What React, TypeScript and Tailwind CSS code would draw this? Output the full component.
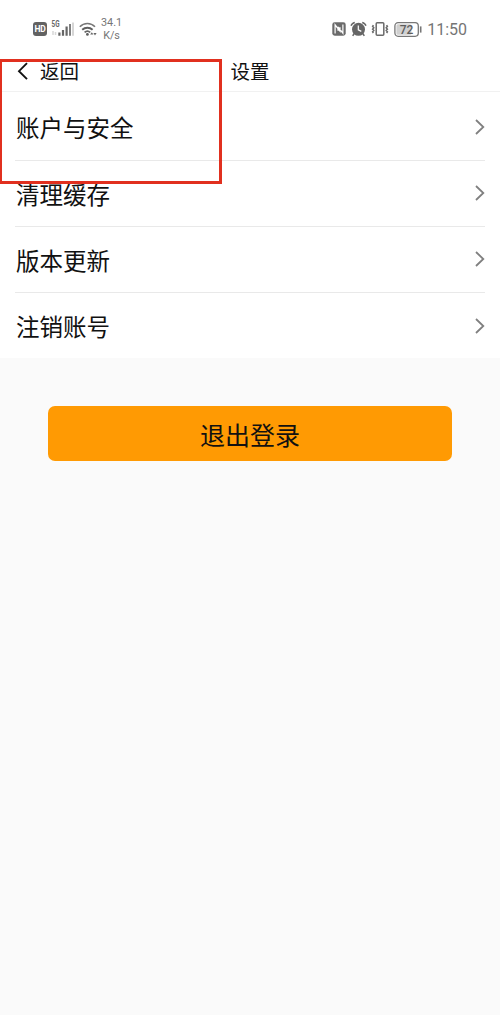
import React from 'react';

interface SettingRowProps {
  label: string;
  last?: boolean;
}

const rows = ['账户与安全', '清理缓存', '版本更新', '注销账号'];

const StatusBar: React.FC = () => {
  return (
    <div className="h-[50px] pt-[15px] pl-[33px] pr-[33px] flex justify-between text-[#757575]">
      <div className="flex h-[28px] items-center">
        {/* HD badge */}
        <div className="w-[14px] h-[14px] rounded-[3px] bg-[#626262] text-white text-[8.5px] leading-[14px] font-bold text-center tracking-[-0.3px]">
          HD
        </div>

        {/* 5G signal */}
        <svg className="ml-[4px]" width="24" height="18" viewBox="0 0 24 18">
          <text x="0.5" y="7.3" fontSize="9" fontWeight="700" fill="#666" textLength="8" lengthAdjust="spacingAndGlyphs">
            5G
          </text>
          <path d="M2 11v4M4.5 12v3" stroke="#d8d8d8" strokeWidth="1.5" />
          <path d="M8.4 12.5v3.2M12 10v5.7M15.6 6.5v9.2" stroke="#666" strokeWidth="2.2" />
          <path d="M19 4v11.7" stroke="#808080" strokeWidth="2" />
          <path d="M22 2.5v13.2" stroke="#ccc" strokeWidth="1.6" />
        </svg>

        {/* Wi-Fi */}
        <svg className="ml-[4px]" width="18" height="16" viewBox="0 0 18 16" fill="none">
          <path d="M0.8 5.8C5 1.4 11.8 1.4 16 5.8" stroke="#777" strokeWidth="1.6" />
          <path d="M3.2 8.8C6.2 6 10.6 6 13.6 8.8" stroke="#5f5f5f" strokeWidth="1.9" />
          <path d="M5.6 11.4C7.4 9.8 9.4 9.8 11.2 11.4" stroke="#666" strokeWidth="1.8" />
          <circle cx="8.4" cy="13.4" r="1.4" fill="#5f5f5f" />
          <path d="M12.8 11.2l-1.6 2.4h3.2zM16 14.6l-1.6-2.6h3.2z" fill="#666" />
        </svg>

        <div className="ml-[4px] pt-px text-[10.8px] leading-[12.5px] text-center">
          <div>34.1</div>
          <div>K/s</div>
        </div>
      </div>

      <div className="flex h-[28px] items-center">
        {/* NFC */}
        <svg width="14" height="14" viewBox="0 0 14 14" fill="none">
          <rect x="0.3" y="0.3" width="13.4" height="13.4" rx="2.4" fill="#6b6b6b" />
          <path d="M3.1 11.6V2.8L8 9.2V5.2M6 4.8v4M10.9 2.4v8.8L6 4.8" stroke="#fff" strokeWidth="1.2" />
        </svg>

        {/* Alarm */}
        <svg className="ml-[4px]" width="17" height="16" viewBox="0 0 17 16" fill="none">
          <circle cx="8.5" cy="8.3" r="6.5" fill="#666" />
          <path d="M1.1 4.8C1.5 3.2 3 1.8 4.8 1.4M15.9 4.8C15.5 3.2 14 1.8 12.2 1.4" stroke="#666" strokeWidth="1.5" />
          <path d="M4.2 12.5L2.7 14.8M12.8 12.5l1.5 2.3" stroke="#666" strokeWidth="1.5" />
          <path d="M8.3 4.6v4.2l3 1.6" stroke="#fff" strokeWidth="1.2" />
        </svg>

        {/* Vibrate */}
        <svg className="ml-[4px]" width="18" height="14" viewBox="0 0 18 14" fill="none" stroke="#6b6b6b">
          <rect x="5.2" y="0.8" width="7.6" height="12.4" rx="1" strokeWidth="1.5" />
          <path d="M2.4 3.2l-.8 1.3 1.2 1.3-1.2 1.4 1.2 1.3-1.2 1.3.8 1.2" strokeWidth="1.5" />
          <path d="M15.6 3.2l.8 1.3-1.2 1.3 1.2 1.4-1.2 1.3 1.2 1.3-.8 1.2" strokeWidth="1.5" />
        </svg>

        {/* Battery */}
        <svg className="ml-[5px]" width="28" height="15" viewBox="0 0 28 15">
          <rect x="0.9" y="0.7" width="23.4" height="13.6" rx="3.2" fill="#fff" stroke="#777" strokeWidth="1.3" />
          <rect x="2.4" y="2.2" width="15" height="10.6" rx="1.5" fill="#d0d0d0" />
          <path d="M26.7 4.4v6.2" stroke="#777" strokeWidth="1.6" />
          <text x="12.6" y="11.7" fontSize="12" fontWeight="500" fill="#5c5c5c" textAnchor="middle">
            72
          </text>
        </svg>

        <span className="ml-[5px] pt-[2px] text-[16px] leading-[28px]">11:50</span>
      </div>
    </div>
  );
};

const SettingRow: React.FC<SettingRowProps> = ({ label, last }) => {
  return (
    <button
      className={`w-full pl-px flex items-center justify-between ${
        last ? 'h-[65px]' : 'h-[66.25px] border-b border-[#e9e9e9]'
      }`}
    >
      <span className="pt-[5px] text-[23.5px] leading-[34px]">{label}</span>
      <svg width="10" height="16" viewBox="0 0 10 16" fill="none">
        <path d="M1 1l7.3 7L1 15" stroke="#808080" strokeWidth="1.8" />
      </svg>
    </button>
  );
};

const App: React.FC = () => {
  return (
    <div className="relative w-[500px] h-[1015px] overflow-hidden bg-[#fafafa] text-[#111] font-['Roboto','Noto_Sans_CJK_SC',sans-serif]">
      <div className="bg-white">
        <StatusBar />

        {/* Header */}
        <header className="h-[42px] px-[17px] grid grid-cols-3 items-center text-[19.5px] leading-[28px] border-b border-[#f1f1f1]">
          <button className="flex items-center">
            <svg width="11" height="18" viewBox="0 0 11 18" fill="none">
              <path d="M10 1.2L2 9.2l8 8" stroke="#111" strokeWidth="1.9" />
            </svg>
            <span className="ml-[12px] pt-[4px]">返回</span>
          </button>
          <h1 className="pt-[4px] text-center">设置</h1>
        </header>

        {/* Setting list */}
        <div className="px-[15px] pt-[2.25px]">
          {rows.map((label, index) => (
            <SettingRow key={label} label={label} last={index === rows.length - 1} />
          ))}
        </div>
      </div>

      {/* Logout */}
      <div className="px-[48px] pt-[48px]">
        <button className="w-full h-[55px] pt-[6px] rounded-[7px] bg-[#ff9a03] text-[25px] leading-[36px] text-center">
          退出登录
        </button>
      </div>

      {/* Highlight frame over the account entry */}
      <div className="absolute left-[-1px] top-[59px] w-[223px] h-[125px] border-[3px] border-[#e1301f]" />
    </div>
  );
};

export default App;
